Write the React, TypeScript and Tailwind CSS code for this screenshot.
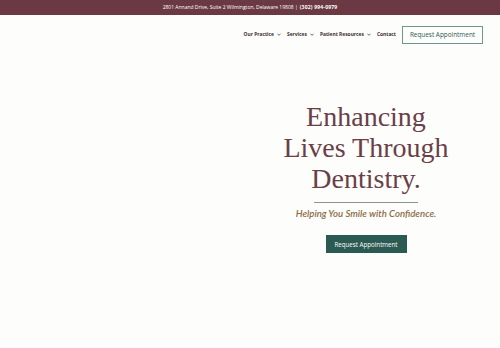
import React from "react";

const Chev = () => (
  <svg width="4" height="3" viewBox="0 0 10 6" className="ml-[3px] inline-block">
    <path d="M1 1l4 4 4-4" fill="none" stroke="#3b2f30" strokeWidth="1.8" />
  </svg>
);

export default function App() {
  return (
    <div className="w-[500px] h-[348px] bg-[#fdfdfb] overflow-hidden" style={{ fontFamily: "'Open Sans', sans-serif" }}>
      <div className="h-[15px] bg-[#6a3943] flex items-center justify-center text-white text-[5px] leading-none">
        <span>2801 Annand Drive, Suite 2 Wilmington, Delaware 19808 | </span>
        <span className="font-bold ml-[2px] tracking-[0.2px]">(302) 994-0979</span>
      </div>
      <div className="flex items-center justify-end h-[39px] pr-[17px]">
        <nav className="flex items-center gap-[6px] text-[4.9px] font-bold text-[#3b2f30] mr-[6px]">
          <span className="flex items-center">Our Practice<Chev /></span>
          <span className="flex items-center">Services<Chev /></span>
          <span className="flex items-center">Patient Resources<Chev /></span>
          <span>Contact</span>
        </nav>
        <div className="w-[81px] h-[18px] border border-[#6f9690] flex items-center justify-center text-[6.4px] text-[#2c5a52]">
          Request Appointment
        </div>
      </div>
      <div className="flex">
        <div className="w-[250px]" />
        <div className="w-[232px] flex flex-col items-center pt-[47px]">
          <h1
            className="text-[28px] leading-[31px] text-[#6a3f48] text-center"
            style={{ fontFamily: "'Liberation Serif', serif" }}
          >
            Enhancing
            <br />
            Lives Through
            <br />
            Dentistry.
          </h1>
          <div className="w-[104px] h-[1px] bg-[#8a9695] mt-[8px]" />
          <p className="mt-[4px] text-[9.6px] italic font-semibold text-[#8c6c45]" style={{ fontFamily: "Lato, sans-serif" }}>
            Helping You Smile with Confidence.
          </p>
          <div className="mt-[14px] w-[81px] h-[18px] bg-[#2b5a53] flex items-center justify-center text-white text-[6.2px]">
            Request Appointment
          </div>
        </div>
      </div>
    </div>
  );
}
